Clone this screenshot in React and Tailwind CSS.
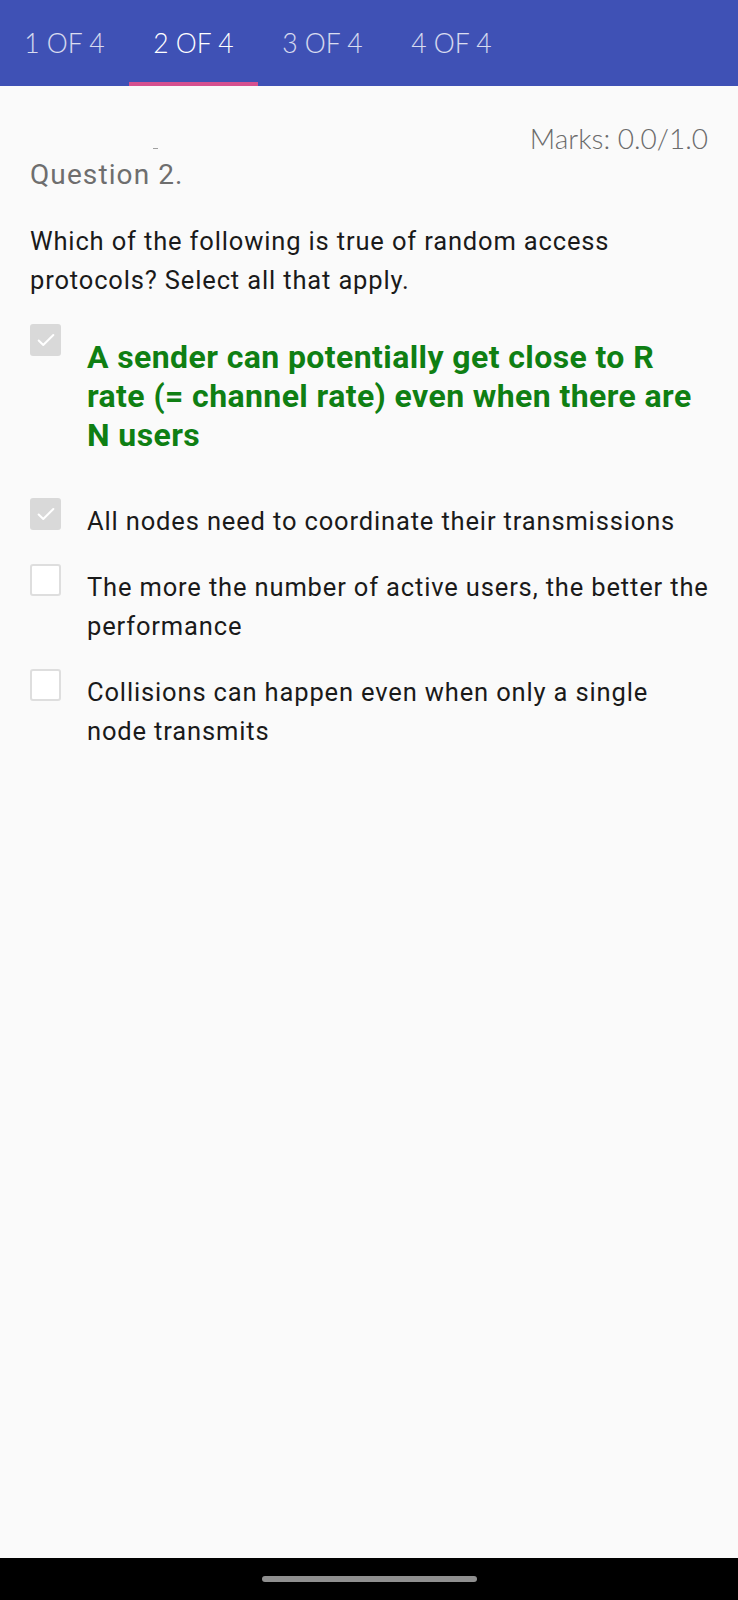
import React from 'react';

const tabs = ['1 OF 4', '2 OF 4', '3 OF 4', '4 OF 4'];

const options = [
	{text: 'A sender can potentially get close to R rate (= channel rate) even when there are N users', checked: true, correct: true},
	{text: 'All nodes need to coordinate their transmissions', checked: true},
	{text: 'The more the number of active users, the better the performance', checked: false},
	{text: 'Collisions can happen even when only a single node transmits', checked: false},
];

const CheckBox = ({checked}) => (
	<div
		className={
			checked
				? 'w-[31px] h-[32px] shrink-0 rounded-[3px] bg-[#d9d9d9] flex items-center justify-center'
				: 'w-[31px] h-[32px] shrink-0 rounded-[3px] bg-white border-2 border-[#dedede]'
		}>
		{checked && (
			<svg width="22" height="22" viewBox="0 0 24 24" fill="none" stroke="#ffffff" strokeWidth="2.2" strokeLinecap="round" strokeLinejoin="round">
				<path d="M4 12.5l5 5L20 6.5" />
			</svg>
		)}
	</div>
);

const App = () => {
	return (
		<div className="h-[1600px] flex flex-col bg-[#fafafa]" style={{fontFamily: 'Roboto, "Noto Sans", sans-serif'}}>
			<div className="h-[86px] bg-[#3f51b5] flex shrink-0">
				{tabs.map((t, i) => (
					<div key={t} className="w-[129px] flex flex-col">
						<div
							className={`flex-1 flex items-center justify-center pt-[6px] text-[26.5px] font-light ${i === 1 ? 'text-white' : 'text-white/80'}`}
							style={{fontFamily: 'Lato, "Noto Sans", sans-serif'}}>
							{t}
						</div>
						<div className={i === 1 ? 'h-[4px] bg-[#d6508f]' : 'h-[4px]'} />
					</div>
				))}
			</div>

			<div className="flex-1 pl-[30px] pr-[30px]">
				<div className="flex justify-between pt-[35px]">
					<div className="ml-[123px] mb-[6px] w-[5px] h-[1px] bg-[#a0a0a0] self-end" />
					<span className="text-[28px] leading-[34px] font-light text-[#6b6b6b]" style={{fontFamily: 'Lato, "Noto Sans", sans-serif'}}>
						Marks: 0.0/1.0
					</span>
				</div>
				<div className="mt-[2px] text-[28px] leading-[36px] text-[#6e6e6e] tracking-[1.1px]">Question 2.</div>

				<p className="mt-[29px] text-[25.5px] leading-[39px] text-[#1a1a1a] tracking-[0.85px]">
					Which of the following is true of random access protocols? Select all that apply.
				</p>

				<div className="mt-[24px] -mr-[6px] flex flex-col">
					{options.map((o, i) => (
						<div key={i} className={`flex ${i === 0 ? 'mb-[43px]' : 'mb-[23px]'}`}>
							<CheckBox checked={o.checked} />
							<div
								className={
									o.correct
										? 'ml-[26px] mt-[14px] text-[32px] leading-[39px] font-bold text-[#0f7f13] tracking-[0.4px]'
										: 'ml-[26px] mt-[4px] text-[25.5px] leading-[39px] text-[#1a1a1a] tracking-[0.85px]'
								}>
								{o.text}
							</div>
						</div>
					))}
				</div>
			</div>

			<div className="h-[42px] bg-black flex items-center justify-center shrink-0">
				<div className="w-[215px] h-[6px] rounded-full bg-[#8f8f8f]" />
			</div>
		</div>
	);
};

export default App;
